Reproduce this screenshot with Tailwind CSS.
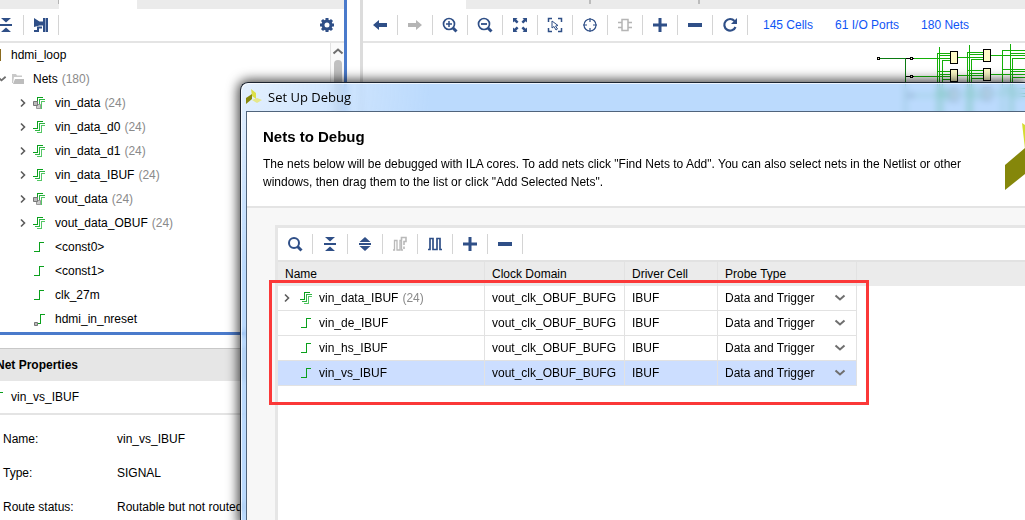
<!DOCTYPE html>
<html lang="en">
<head>
<meta charset="utf-8">
<meta name="viewport" content="width=device-width, initial-scale=1">
<title>Set Up Debug</title>
<script src="https://cdn.jsdelivr.net/npm/@tailwindcss/browser@4"></script>
</head>
<body class="bg-white">
<svg class="hidden" aria-hidden="true">
  <symbol id="chev-r" viewBox="0 0 8 10"><path d="M2 1.500l3.500 3.500L2 8.500" fill="none" stroke="#5c5c5c" stroke-width="1.600"/></symbol>
  <symbol id="chev-d" viewBox="0 0 12 8"><path d="M1.500 1.500l4.500 4 4.500-4" fill="none" stroke="#6f6f6f" stroke-width="2"/></symbol>
  <symbol id="net" viewBox="0 0 14 14"><path d="M1 11.500h5.500v-9H11" fill="none" stroke="#0aa01c" shape-rendering="crispEdges"/></symbol>
  <symbol id="net-port" viewBox="0 0 14 14"><path d="M4 11.500h3.500v-9H12" fill="none" stroke="#0aa01c" shape-rendering="crispEdges"/><path d="M1.500 10.500h3v3h-3z" fill="#bbb" stroke="#777"/></symbol>
  <symbol id="bus" viewBox="0 0 14 14"><g fill="none" shape-rendering="crispEdges"><path d="M4 12.500h4.500v-7H12" stroke="#55c766"/><path d="M2 10.500h4.500v-7H12" stroke="#2fb544"/><path d="M0 8.500h4.500v-7H10" stroke="#0aa01c"/></g></symbol>
  <symbol id="bus-port" viewBox="0 0 14 14"><g fill="none" shape-rendering="crispEdges"><path d="M4 12.500h4.500v-7H12" stroke="#55c766"/><path d="M4 10.500h2.500v-7H12" stroke="#2fb544"/><path d="M3 8.500h1.500v-7H10" stroke="#0aa01c"/></g><path d="M3.500 8.500h4v4h-4z" fill="#ccc" stroke="#999"/><path d="M.5 5.500h4v4h-4z" fill="#bbb" stroke="#777"/></symbol>
  <symbol id="collapse" viewBox="0 0 16 16"><path d="M3 1h10L8 5.500zM2 7h12v2H2zM8 10.500L13 15H3z" fill="#2f4f87"/></symbol>
  <symbol id="expand" viewBox="0 0 16 16"><path d="M8 1l5.500 5h-11zM2 7h12v2H2zM2.500 10h11L8 15z" fill="#2f4f87"/></symbol>
  <symbol id="plus" viewBox="0 0 16 16"><path d="M1 6.500h5.500V1h3v5.500H15v3H9.500V15h-3V9.500H1z" fill="#2f4f87"/></symbol>
  <symbol id="minus" viewBox="0 0 16 16"><path d="M1 6h14v4H1z" fill="#2f4f87"/></symbol>
  <symbol id="search" viewBox="0 0 16 16"><circle cx="7" cy="7" r="5" fill="none" stroke="#2f4f87" stroke-width="2"/><path d="M10.500 10.500l4 4" stroke="#2f4f87" stroke-width="3"/></symbol>
  <symbol id="zin" viewBox="0 0 16 16"><circle cx="7" cy="7" r="5.500" fill="none" stroke="#2f4f87" stroke-width="1.700"/><path d="M11 11l3.500 3.500" stroke="#2f4f87" stroke-width="3"/><path d="M4 7h6M7 4v6" stroke="#2f4f87" stroke-width="1.500"/></symbol>
  <symbol id="zout" viewBox="0 0 16 16"><circle cx="7" cy="7" r="5.500" fill="none" stroke="#2f4f87" stroke-width="1.700"/><path d="M11 11l3.500 3.500" stroke="#2f4f87" stroke-width="3"/><path d="M4 7h6" stroke="#2f4f87" stroke-width="1.800"/></symbol>
</svg>

<main class="relative flex min-h-screen overflow-hidden font-['Liberation_Sans',Arial,sans-serif] text-xs text-black">
  <!-- Netlist and net properties -->
  <div class="flex w-[347px] shrink-0 flex-col overflow-hidden">
    <section class="border-r-3 border-b-3 border-[#4a7acb]">
      <div class="flex h-[9px] bg-[#ebebeb]">
        <span class="h-1 w-[59px] border-r border-[#b4b4b4]"></span>
        <span class="w-[78px] bg-white"></span>
      </div>
      <div class="flex h-[34px] items-center border-b-2 border-[#e4e4e4]">
        <button class="-ml-[11px] grid h-5 w-[35px] place-items-center border-r border-[#d4d4d4]" aria-label="Collapse all"><svg class="size-4"><use href="#collapse"/></svg></button>
        <button class="grid h-5 w-[35px] place-items-center border-r border-[#d4d4d4]" aria-label="Show hierarchy"><svg class="size-4" viewBox="0 0 16 16"><path d="M1 1l5.500 3.500H10V1h5v14h-5V8.500H6.500L1 10z" fill="#2f4f87"/><path d="M1 14h4v-3.500h4" fill="none" stroke="#2f4f87" stroke-width="2"/><path d="M12.500 1v14" stroke="#8fa3c6"/></svg></button>
        <button class="mr-[9px] ml-auto grid size-4 place-items-center" aria-label="Settings"><svg class="size-4" viewBox="0 0 16 16"><g fill="none" stroke="#2f4f87"><circle cx="8" cy="8" r="4" stroke-width="3"/><path d="M8 1v3M8 12v3M1 8h3M12 8h3M3 3l2 2M11 11l2 2M13 3l-2 2M3 13l2-2" stroke-width="3"/></g></svg></button>
      </div>
      <div class="flex">
        <ul class="grow pb-px leading-6">
          <li class="flex items-center"><span class="mr-[10px] h-3 w-px bg-[#8a6a1e]"></span>hdmi_loop</li>
          <li>
            <div class="flex items-center"><svg class="-ml-1 h-2 w-[11px]"><use href="#chev-d"/></svg><svg class="mr-[9px] ml-1 h-3 w-[13px]" viewBox="0 0 13 12"><path d="M1 10V1h4l1 1.500h5V4H3L2 10z" fill="#c9c9c9"/><path d="M4 6h9v5H2z" fill="#bdbdbd"/></svg>Nets<span class="ml-1 text-[#8a8a8a]">(180)</span></div>
            <ul>
              <li class="flex items-center pl-[19px]"><svg class="h-[10px] w-2"><use href="#chev-r"/></svg><svg class="mr-2 ml-[6px] size-[14px]"><use href="#bus-port"/></svg>vin_data<span class="ml-1 text-[#8a8a8a]">(24)</span></li>
              <li class="flex items-center pl-[19px]"><svg class="h-[10px] w-2"><use href="#chev-r"/></svg><svg class="mr-2 ml-[6px] size-[14px]"><use href="#bus"/></svg>vin_data_d0<span class="ml-1 text-[#8a8a8a]">(24)</span></li>
              <li class="flex items-center pl-[19px]"><svg class="h-[10px] w-2"><use href="#chev-r"/></svg><svg class="mr-2 ml-[6px] size-[14px]"><use href="#bus"/></svg>vin_data_d1<span class="ml-1 text-[#8a8a8a]">(24)</span></li>
              <li class="flex items-center pl-[19px]"><svg class="h-[10px] w-2"><use href="#chev-r"/></svg><svg class="mr-2 ml-[6px] size-[14px]"><use href="#bus"/></svg>vin_data_IBUF<span class="ml-1 text-[#8a8a8a]">(24)</span></li>
              <li class="flex items-center pl-[19px]"><svg class="h-[10px] w-2"><use href="#chev-r"/></svg><svg class="mr-2 ml-[6px] size-[14px]"><use href="#bus-port"/></svg>vout_data<span class="ml-1 text-[#8a8a8a]">(24)</span></li>
              <li class="flex items-center pl-[19px]"><svg class="h-[10px] w-2"><use href="#chev-r"/></svg><svg class="mr-2 ml-[6px] size-[14px]"><use href="#bus"/></svg>vout_data_OBUF<span class="ml-1 text-[#8a8a8a]">(24)</span></li>
              <li class="flex items-center pl-[33px]"><svg class="mr-2 size-[14px]"><use href="#net"/></svg>&lt;const0&gt;</li>
              <li class="flex items-center pl-[33px]"><svg class="mr-2 size-[14px]"><use href="#net"/></svg>&lt;const1&gt;</li>
              <li class="flex items-center pl-[33px]"><svg class="mr-2 size-[14px]"><use href="#net"/></svg>clk_27m</li>
              <li class="flex items-center pl-[33px]"><svg class="mr-2 size-[14px]"><use href="#net-port"/></svg>hdmi_in_nreset</li>
            </ul>
          </li>
        </ul>
        <div class="flex w-[14px] flex-col items-center border-l border-[#e2e2e2] bg-[#fafafa] pt-1">
          <svg class="h-2 w-3 rotate-180"><use href="#chev-d"/></svg>
          <span class="mt-[5px] h-[180px] w-2 rounded-full bg-[#c0c0c0]"></span>
        </div>
      </div>
    </section>
    <section class="mt-[13px] grow">
      <h2 class="-ml-1 border-t border-[#c8c8c8] bg-[#e6e6e6] text-xs leading-8 font-bold">Net Properties</h2>
      <div class="flex h-[34px] items-center border-b-2 border-[#e4e4e4]"><svg class="mr-[5px] -ml-2 size-[14px]"><use href="#net"/></svg>vin_vs_IBUF</div>
      <dl class="grid grid-cols-[114px_1fr] pt-[7px] pl-[3px] leading-[34px]">
        <dt>Name:</dt><dd>vin_vs_IBUF</dd>
        <dt>Type:</dt><dd>SIGNAL</dd>
        <dt>Route status:</dt><dd>Routable but not routed</dd>
      </dl>
    </section>
  </div>

  <!-- Schematic -->
  <section class="ml-[13px] min-w-0 grow border-l-3 border-[#dcdcdc]">
    <div class="flex h-[9px] bg-[#ebebeb]">
      <span class="w-[103px] bg-white"></span>
      <span class="h-1 w-[125px] border-r-2 border-[#bcbcbc]"></span>
      <span class="h-1 w-[109px] border-r-2 border-[#bcbcbc]"></span>
    </div>
    <div class="flex h-[34px] items-center border-b-2 border-[#e4e4e4]">
      <button class="grid h-5 w-[35px] place-items-center border-r border-[#d4d4d4]" aria-label="Back"><svg class="size-4" viewBox="0 0 16 16"><path d="M1 8l6-5v3h8v4H7v3z" fill="#2f4f87"/></svg></button>
      <button class="grid h-5 w-[35px] place-items-center border-r border-[#d4d4d4]" aria-label="Forward"><svg class="size-4" viewBox="0 0 16 16"><path d="M15 8L9 3v3H1v4h8v3z" fill="#b5b5b5"/></svg></button>
      <button class="grid h-5 w-[35px] place-items-center border-r border-[#d4d4d4]" aria-label="Zoom in"><svg class="size-4"><use href="#zin"/></svg></button>
      <button class="grid h-5 w-[35px] place-items-center border-r border-[#d4d4d4]" aria-label="Zoom out"><svg class="size-4"><use href="#zout"/></svg></button>
      <button class="grid h-5 w-[35px] place-items-center border-r border-[#d4d4d4]" aria-label="Zoom fit"><svg class="size-4" viewBox="0 0 16 16"><path d="M1 1h4.500L4.200 2.300 6.500 4.800 4.800 6.500 2.300 4.200 1 5.500zM15 1v4.500l-1.300-1.300-2.500 2.300-1.700-1.700 2.300-2.500L10.500 1zM1 15v-4.500l1.300 1.300 2.500-2.300 1.700 1.700-2.300 2.500L5.500 15zM15 15h-4.500l1.300-1.300-2.300-2.500 1.700-1.700 2.500 2.300L15 10.500z" fill="#2f4f87"/></svg></button>
      <button class="grid h-5 w-[35px] place-items-center border-r border-[#d4d4d4]" aria-label="Zoom to selection"><svg class="size-4" viewBox="0 0 16 16"><g fill="none" stroke="#2f4f87"><path d="M1.500 5V1.500H5M11 1.500h3.500V5M1.500 11v3.500H5M11 14.500h3.500V11" stroke-width="1.500"/><path d="M5 4v7l2-1.500L9 13l1.500-1-2-3 2.500-.5z"/></g></svg></button>
      <button class="grid h-5 w-[35px] place-items-center border-r border-[#d4d4d4]" aria-label="Center"><svg class="size-4" viewBox="0 0 16 16"><g fill="none" stroke="#2f4f87" stroke-width="1.200"><circle cx="8" cy="8" r="6"/><path d="M8 1v4M8 11v4M1 8h4M11 8h4"/></g></svg></button>
      <button class="grid h-5 w-[35px] place-items-center border-r border-[#d4d4d4]" aria-label="Cell pins"><svg class="size-4" viewBox="0 0 16 16"><path d="M5 2.500h6v11H5zM1 5.500h4M11 5.500h4M1 10.500h4M11 10.500h4" fill="none" stroke="#b5b5b5" stroke-width="1.500"/></svg></button>
      <button class="grid h-5 w-[35px] place-items-center border-r border-[#d4d4d4]" aria-label="Add"><svg class="size-4"><use href="#plus"/></svg></button>
      <button class="grid h-5 w-[35px] place-items-center border-r border-[#d4d4d4]" aria-label="Remove"><svg class="size-4"><use href="#minus"/></svg></button>
      <button class="grid h-5 w-[35px] place-items-center border-r border-[#d4d4d4]" aria-label="Refresh"><svg class="size-4" viewBox="0 0 16 16"><path d="M12.500 4A5.800 5.800 0 1 0 13.500 10" fill="none" stroke="#2f4f87" stroke-width="2.200"/><path d="M15 1v6H9z" fill="#2f4f87"/></svg></button>
      <nav class="ml-[15px] flex gap-[22px] whitespace-nowrap text-[#0f55f5]">
        <a href="#cells">145 Cells</a><a href="#ports">61 I/O Ports</a><a href="#nets">180 Nets</a>
      </nav>
    </div>
    <div class="flex justify-end">
      <svg class="h-[85px] w-[150px]" viewBox="875 43 150 85" role="img" aria-label="Schematic" shape-rendering="crispEdges">
        <g fill="none">
          <path d="M880 58.500h26M905.500 58v70" stroke="#0b7a12"/>
          <path d="M913 58.500h37M913 76.500h37M913 95.500h37M939.500 47v81M937.500 53v75M942.500 60v68M937 53.500h13M939 55.500h11M942 60.500h8M937 71.500h13M939 74.500h11M942 79.500h8M937 90.500h13M939 93.500h11M942 98.500h8M958 57.500h25M958 75.500h25M958 94.500h25M967.500 52v76M969.500 45v83M971.500 59v69M967 52.500h16M969 54.500h14M971 59.500h12M967 70.500h16M969 73.500h14M971 78.500h12M967 89.500h16M971 97.500h12M991 55.500h34M991 74.500h34M991 93.500h34M1002.500 50v78M1010.500 44v84M1012.500 58v70M1002 50.500h23M1010 53.500h15M1012 58.500h13M1002 69.500h23M1010 71.500h15M1012 77.500h13M1002 88.500h23M1012 96.500h13" stroke="#14b008"/>
          <path d="M906 58.500h8M906 76.500h8M906 95.500h8" stroke="#000"/>
        </g>
        <g fill="#fffbc8" stroke="#000">
          <path d="M877.500 57.500h2v2h-2zM910.500 57.500h2v2h-2zM910.500 75.500h2v2h-2zM910.500 94.500h2v2h-2z"/>
          <path d="M950.500 51.500h7v12h-7zM950.500 69.500h7v12h-7zM950.500 88.500h7v12h-7zM983.500 49.500h7v12h-7zM983.500 68.500h7v12h-7zM983.500 87.500h7v12h-7z"/>
        </g>
      </svg>
    </div>
  </section>

  <!-- Set Up Debug window, floating over the workspace -->
  <div class="absolute top-[82px] right-0 bottom-0 left-60 flex flex-col rounded-tl-lg border-t border-l border-[#1c2430] bg-[#9ecbfc]/70 bg-[radial-gradient(circle_at_0_0,rgb(255_255_255/0.6),transparent_190px)] pl-[5px] shadow-[0_0_12px_2px_rgba(0,0,0,0.75)] inset-shadow-[1px_1px_0_rgb(255_255_255/0.7)] backdrop-blur-[3px]" role="dialog" aria-labelledby="dlg-title">
    <div class="flex h-7 items-center">
      <svg class="mr-[6px] size-4" viewBox="0 0 16 16"><path d="M5 0l5 4v6L6 7z" fill="#dce04a"/><path d="M0 9l6-4v5l-6 5z" fill="#87890c"/><path d="M6 11l5-2 5 2-5 3z" fill="#e6e88a"/></svg>
      <span id="dlg-title" class="font-['Open_Sans','Noto_Sans',sans-serif] text-[13px] leading-5">Set Up Debug</span>
    </div>
    <div class="flex grow flex-col border-t border-l border-[#50647c] bg-[#f7f7f7]">
      <header class="flex justify-between border-b-2 border-[#e4e4e4] bg-white">
        <div class="pt-4 pb-[15px] pl-4">
          <h1 class="text-[15px] leading-[18px] font-bold">Nets to Debug</h1>
          <p class="mt-[9px] leading-[18px]">The nets below will be debugged with ILA cores. To add nets click "Find Nets to Add". You can also select nets in the Netlist or other<br>windows, then drag them to the list or click "Add Selected Nets".</p>
        </div>
        <svg class="mt-[10px] h-[70px] w-5 shrink-0" viewBox="0 0 20 70"><path d="M17 1l3 2v24z" fill="#d3dc32"/><path d="M0 43l20-17v26L0 68z" fill="#85870a"/></svg>
      </header>
      <div class="mt-[17px] ml-7 grow border-t-3 border-l-3 border-[#e6e6e6] bg-white">
        <div class="flex h-8 items-center">
          <button class="grid h-5 w-[35px] place-items-center border-r border-[#d4d4d4]" aria-label="Find"><svg class="size-4"><use href="#search"/></svg></button>
          <button class="grid h-5 w-[35px] place-items-center border-r border-[#d4d4d4]" aria-label="Collapse all"><svg class="size-4"><use href="#collapse"/></svg></button>
          <button class="grid h-5 w-[35px] place-items-center border-r border-[#d4d4d4]" aria-label="Expand all"><svg class="size-4"><use href="#expand"/></svg></button>
          <button class="grid h-5 w-[35px] place-items-center border-r border-[#d4d4d4]" aria-label="Unknown clock nets"><svg class="size-4" viewBox="0 0 16 16"><g fill="none" stroke="#b9b9b9" stroke-width="1.300"><path d="M1 14h1.500V4.500H5V14h3V4.500h1.500V14H11"/><path d="M9.500 4V1.500H14v4h-2V9M12 10.500V13" stroke-width="1.600"/></g></svg></button>
          <button class="grid h-5 w-[35px] place-items-center border-r border-[#d4d4d4]" aria-label="Select clock domain"><svg class="size-4" viewBox="0 0 16 16"><path d="M1 13.500h2v-11h3v11h4v-11h3v11h2" fill="none" stroke="#2f4f87" stroke-width="1.700"/></svg></button>
          <button class="grid h-5 w-[35px] place-items-center border-r border-[#d4d4d4]" aria-label="Add nets"><svg class="size-4"><use href="#plus"/></svg></button>
          <button class="grid h-5 w-[35px] place-items-center border-r border-[#d4d4d4]" aria-label="Remove nets"><svg class="size-4"><use href="#minus"/></svg></button>
        </div>
        <div class="relative">
          <table class="w-full table-fixed border-separate border-spacing-0 text-left">
            <colgroup><col class="w-[207px]"><col class="w-[140px]"><col class="w-[93px]"><col class="w-[139px]"><col></colgroup>
            <thead class="bg-[#ebebeb]">
              <tr class="h-[26px] *:border-t-2 *:border-[#e2e2e2] *:pl-[7px] *:font-normal">
                <th class="border-r">Name</th><th class="border-r">Clock Domain</th><th class="border-r">Driver Cell</th><th class="border-r">Probe Type</th><td></td>
              </tr>
            </thead>
            <tbody class="whitespace-nowrap">
              <tr class="h-[25px]">
                <td class="border-r border-b border-[#e2e2e2] pl-[5px]"><div class="flex items-center"><svg class="h-[10px] w-2"><use href="#chev-r"/></svg><svg class="mr-[5px] ml-[9px] size-[14px]"><use href="#bus"/></svg>vin_data_IBUF<span class="ml-1 text-[#8a8a8a]">(24)</span></div></td>
                <td class="border-r border-b border-[#e2e2e2] pl-[7px]">vout_clk_OBUF_BUFG</td>
                <td class="border-r border-b border-[#e2e2e2] pl-[7px]">IBUF</td>
                <td class="relative border-r border-b border-[#e2e2e2] pl-[7px]"><select class="w-full appearance-none" aria-label="Probe type of vin_data_IBUF"><option>Data and Trigger</option><option>Data</option><option>Trigger</option></select><svg class="pointer-events-none absolute top-2 right-[10px] h-2 w-3"><use href="#chev-d"/></svg></td>
                <td></td>
              </tr>
              <tr class="h-[25px]">
                <td class="border-r border-b border-[#e2e2e2] pl-[22px]"><div class="flex items-center"><svg class="mr-[5px] size-[14px]"><use href="#net"/></svg>vin_de_IBUF</div></td>
                <td class="border-r border-b border-[#e2e2e2] pl-[7px]">vout_clk_OBUF_BUFG</td>
                <td class="border-r border-b border-[#e2e2e2] pl-[7px]">IBUF</td>
                <td class="relative border-r border-b border-[#e2e2e2] pl-[7px]"><select class="w-full appearance-none" aria-label="Probe type of vin_de_IBUF"><option>Data and Trigger</option><option>Data</option><option>Trigger</option></select><svg class="pointer-events-none absolute top-2 right-[10px] h-2 w-3"><use href="#chev-d"/></svg></td>
                <td></td>
              </tr>
              <tr class="h-[25px]">
                <td class="border-r border-b border-[#e2e2e2] pl-[22px]"><div class="flex items-center"><svg class="mr-[5px] size-[14px]"><use href="#net"/></svg>vin_hs_IBUF</div></td>
                <td class="border-r border-b border-[#e2e2e2] pl-[7px]">vout_clk_OBUF_BUFG</td>
                <td class="border-r border-b border-[#e2e2e2] pl-[7px]">IBUF</td>
                <td class="relative border-r border-b border-[#e2e2e2] pl-[7px]"><select class="w-full appearance-none" aria-label="Probe type of vin_hs_IBUF"><option>Data and Trigger</option><option>Data</option><option>Trigger</option></select><svg class="pointer-events-none absolute top-2 right-[10px] h-2 w-3"><use href="#chev-d"/></svg></td>
                <td></td>
              </tr>
              <tr class="h-[25px]" aria-selected="true">
                <td class="border-r border-b border-[#e2e2e2] bg-[#ccdeff] pl-[22px]"><div class="flex items-center"><svg class="mr-[5px] size-[14px]"><use href="#net"/></svg>vin_vs_IBUF</div></td>
                <td class="border-r border-b border-[#e2e2e2] bg-[#ccdeff] pl-[7px]">vout_clk_OBUF_BUFG</td>
                <td class="border-r border-b border-[#e2e2e2] bg-[#ccdeff] pl-[7px]">IBUF</td>
                <td class="relative border-r border-b border-[#e2e2e2] bg-[#ccdeff] pl-[7px]"><select class="w-full appearance-none" aria-label="Probe type of vin_vs_IBUF"><option>Data and Trigger</option><option>Data</option><option>Trigger</option></select><svg class="pointer-events-none absolute top-2 right-[10px] h-2 w-3"><use href="#chev-d"/></svg></td>
                <td></td>
              </tr>
            </tbody>
          </table>
          <!-- Highlight box around the debug nets -->
          <div class="pointer-events-none absolute top-5 -left-[9px] h-[125px] w-[600px] border-3 border-[#fb3838]"></div>
        </div>
      </div>
    </div>
  </div>
</main>
</body>
</html>
